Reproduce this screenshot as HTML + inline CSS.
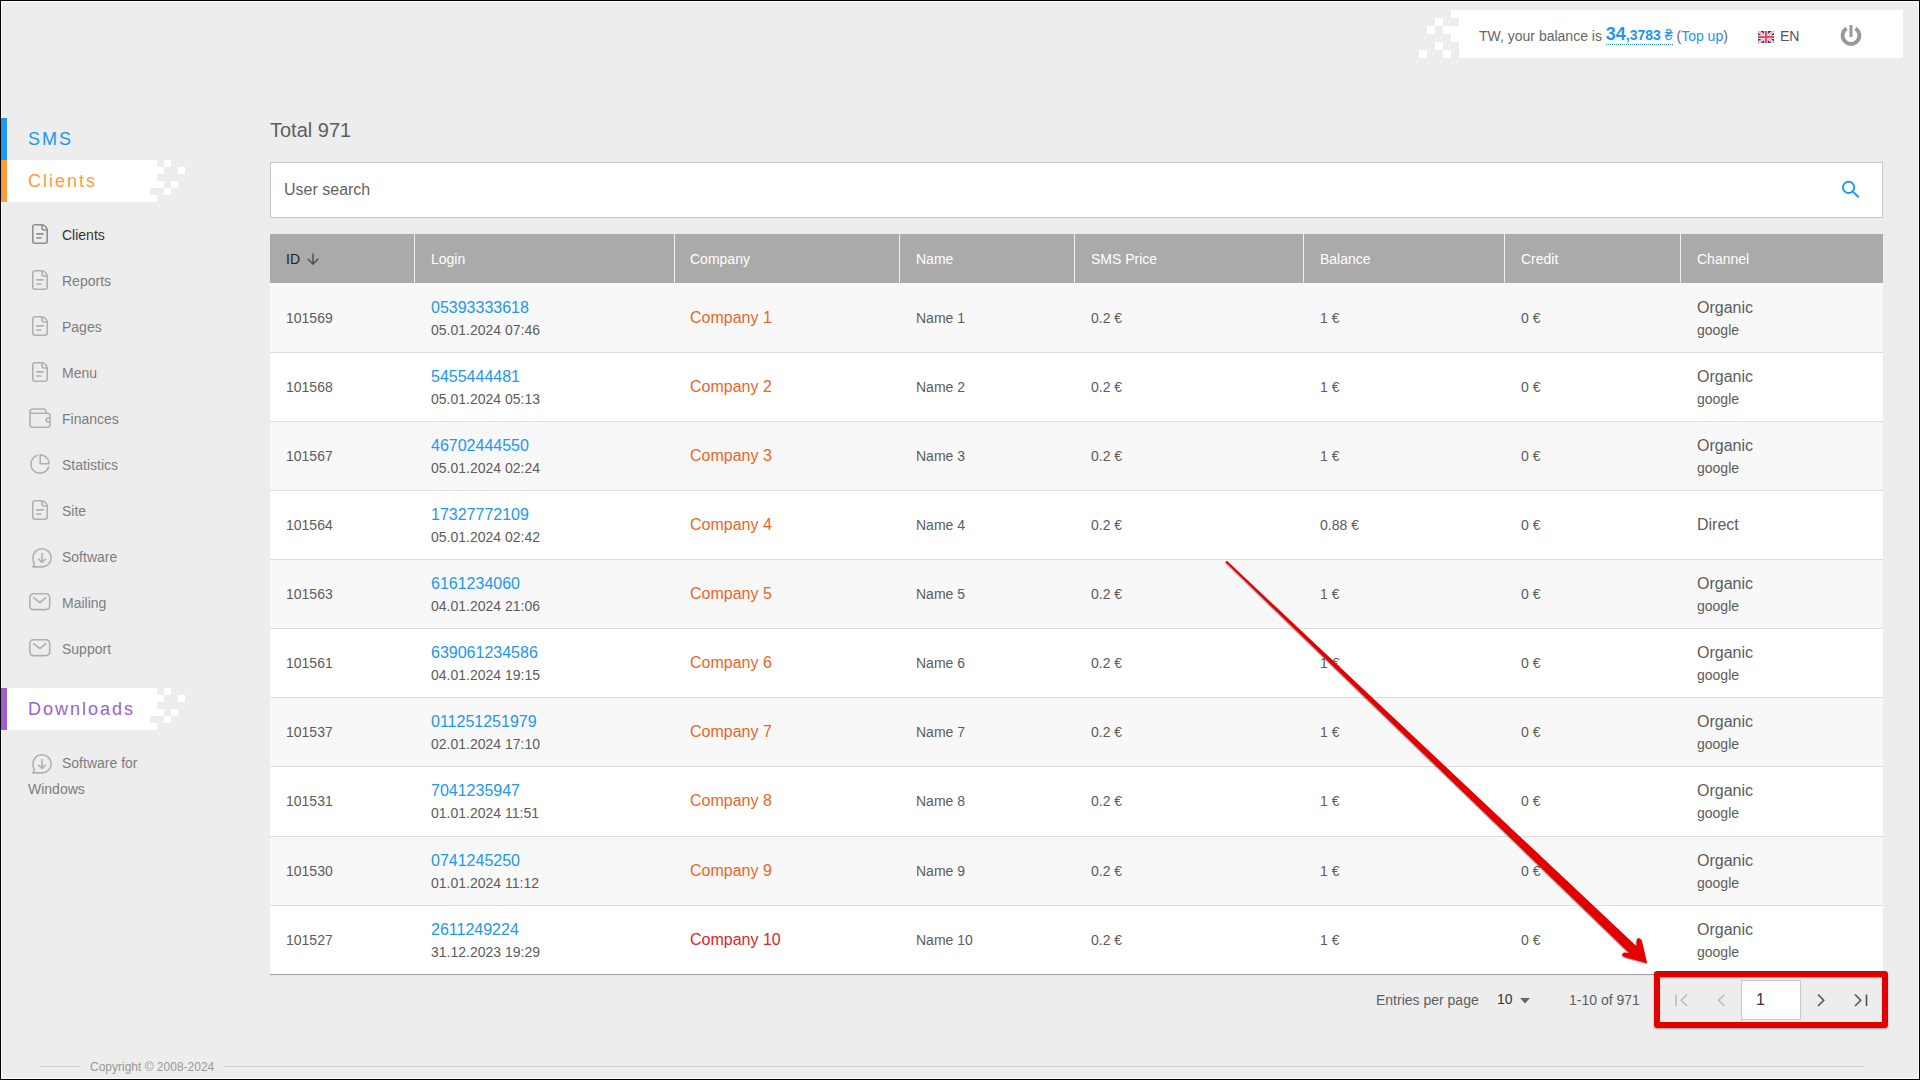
<!DOCTYPE html>
<html><head><meta charset="utf-8"><title>Clients</title>
<style>
*{box-sizing:border-box;margin:0;padding:0}
html,body{width:1920px;height:1080px;overflow:hidden}
body{background:#ededed;font-family:"Liberation Sans",sans-serif;position:relative;color:#555}
.abs{position:absolute;white-space:nowrap}
.frame{position:absolute;left:0;top:0;width:1920px;height:1080px;border:1px solid #000;pointer-events:none;z-index:50}
.frame2{position:absolute;left:1px;top:1px;width:1918px;height:1078px;border:1px solid #fff;pointer-events:none;z-index:50}
/* top bar */
.topbox{position:absolute;left:1459px;top:10px;width:444px;height:48px;background:#fff}
.px{position:absolute;background:#fff}
.tb{position:absolute;white-space:nowrap;font-size:14px;line-height:16px;color:#666}
/* sidebar */
.bar{position:absolute;left:1px;width:6px;z-index:60}
.sec{position:absolute;white-space:nowrap;font-size:18px;line-height:20px;letter-spacing:2px}
.mi{position:absolute;left:62px;white-space:nowrap;font-size:14px;line-height:16px;color:#7d7d7d}
.ic{position:absolute}
/* main */
.total{position:absolute;left:270px;top:119px;font-size:20px;line-height:22px;color:#5e5e5e;white-space:nowrap}
.search{position:absolute;left:270px;top:162px;width:1613px;height:56px;background:#fff;border:1px solid #c8c8c8}
.search .ph{position:absolute;left:13px;top:18px;font-size:16px;line-height:18px;color:#636363;white-space:nowrap}
.tbl{position:absolute;left:270px;top:234px;width:1613px;height:741px}
.thead{position:absolute;left:0;top:0;width:1613px;height:49px;background:#aaa}
.th{position:absolute;top:17px;font-size:14px;line-height:16px;color:#fff;white-space:nowrap}
.vd{position:absolute;top:0;width:1px;height:49px;background:#eee}
.row{position:absolute;left:0;width:1613px;border-bottom:1px solid #ddd}
.row.last{border-bottom:1px solid #a3a3a3;box-shadow:0 1px 0 #e4e4e4}
.c{position:absolute;white-space:nowrap}
.id,.nm{top:27px;font-size:14px;line-height:16px;color:#5c5c5c}
.lg{top:16px}
.ln{font-size:16px;line-height:18px;color:#2196f3}
.dt{font-size:14px;line-height:16px;color:#5c5c5c;margin-top:5px}
.co{top:26px;font-size:16px;line-height:18px;color:#ec6526}
.co.red{color:#d9262a}
.ch{top:16px}
.ch .o{font-size:16px;line-height:18px;color:#5c5c5c}
.ch .g{font-size:14px;line-height:16px;color:#5c5c5c;margin-top:5px}
.ch1{top:26px;font-size:16px;line-height:18px;color:#5c5c5c}
/* pager */
.pg{position:absolute;white-space:nowrap;font-size:14px;line-height:16px;color:#5e5e5e}
.footer-line{position:absolute;top:1066px;height:1px;background:#ccc}

</style></head><body>
<div class="frame"></div><div class="frame2"></div>

<!-- top bar -->
<div class="topbox"></div>
<div class="px" style="left:1451px;top:10px;width:8px;height:8px"></div>
<div class="px" style="left:1435px;top:18px;width:8px;height:8px"></div>
<div class="px" style="left:1427px;top:26px;width:8px;height:8px"></div>
<div class="px" style="left:1443px;top:26px;width:16px;height:8px"></div>
<div class="px" style="left:1451px;top:34px;width:8px;height:8px"></div>
<div class="px" style="left:1435px;top:42px;width:8px;height:8px"></div>
<div class="px" style="left:1419px;top:50px;width:8px;height:8px"></div>
<div class="px" style="left:1443px;top:50px;width:8px;height:8px"></div>
<div class="tb" style="left:1479px;top:26px">TW, your balance is <span style="color:#2196f3;font-weight:bold;border-bottom:1px dotted #2196f3;vertical-align:1px;padding-bottom:1px"><span style="font-size:18px">34</span><span style="font-size:14px">,3783 <span style="font-weight:normal">₴</span></span></span> (<span style="color:#2196f3">Top up</span>)</div>
<svg class="abs" style="left:1758px;top:31px" width="16" height="12" viewBox="0 0 16 12">
<rect width="16" height="12" fill="#2b3a8a"/>
<path d="M0,0 L16,12 M16,0 L0,12" stroke="#fff" stroke-width="2.6"/>
<path d="M0,0 L16,12 M16,0 L0,12" stroke="#f0506a" stroke-width="0.8"/>
<path d="M8,0 V12 M0,6 H16" stroke="#fff" stroke-width="3.6"/>
<path d="M8,0 V12 M0,6 H16" stroke="#f54458" stroke-width="2.2"/>
</svg>
<div class="tb" style="left:1780px;top:28px;color:#555">EN</div>
<svg class="abs" style="left:1840px;top:25px" width="22" height="22" viewBox="0 0 22 22">
<path d="M6.6,3.4 A8.4,8.4 0 1 0 15.4,3.4" fill="none" stroke="#999" stroke-width="3.8"/>
<path d="M11,0 V12" stroke="#999" stroke-width="3"/>
</svg>

<!-- sidebar -->
<div class="bar" style="top:118px;height:42px;background:#2196f3"></div>
<div class="sec" style="left:28px;top:129px;color:#2196f3">SMS</div>

<svg class="abs" style="left:7px;top:160px" width="180" height="42">
<path fill="#fff" d="M0,0H150V28H143V35H150V42H0Z M157,0h7v7h-7z M150,7h7v7h-7z M171,7h7v7h-7z M150,21h7v7h-7z M164,21h7v7h-7z M157,28h7v7h-7z" />
</svg>
<div class="bar" style="top:160px;height:42px;background:#ff9a40"></div>
<div class="sec" style="left:28px;top:171px;color:#ff9a40">Clients</div>

<svg class="ic" style="left:32px;top:224px" width="16" height="20" viewBox="0 0 16 20"><path d="M0.8,3 Q0.8,0.8 3,0.8 H10.3 Q11.6,0.8 13.2,2.4 L13.8,3 Q15.2,4.4 15.2,6 V17 Q15.2,19.2 13,19.2 H3 Q0.8,19.2 0.8,17 Z M10,0.8 V4 Q10,6 12,6 H15.2 M4.3,9.9 H11.7 M4.3,14 H9.5" fill="none" stroke="#8f8f8f" stroke-width="1.6" stroke-linejoin="round"/></svg>
<div class="mi" style="top:227px;color:#333">Clients</div>
<svg class="ic" style="left:32px;top:270px" width="16" height="20" viewBox="0 0 16 20"><path d="M0.8,3 Q0.8,0.8 3,0.8 H10.3 Q11.6,0.8 13.2,2.4 L13.8,3 Q15.2,4.4 15.2,6 V17 Q15.2,19.2 13,19.2 H3 Q0.8,19.2 0.8,17 Z M10,0.8 V4 Q10,6 12,6 H15.2 M4.3,9.9 H11.7 M4.3,14 H9.5" fill="none" stroke="#b0b0b0" stroke-width="1.6" stroke-linejoin="round"/></svg>
<div class="mi" style="top:273px;color:#7d7d7d">Reports</div>
<svg class="ic" style="left:32px;top:316px" width="16" height="20" viewBox="0 0 16 20"><path d="M0.8,3 Q0.8,0.8 3,0.8 H10.3 Q11.6,0.8 13.2,2.4 L13.8,3 Q15.2,4.4 15.2,6 V17 Q15.2,19.2 13,19.2 H3 Q0.8,19.2 0.8,17 Z M10,0.8 V4 Q10,6 12,6 H15.2 M4.3,9.9 H11.7 M4.3,14 H9.5" fill="none" stroke="#b0b0b0" stroke-width="1.6" stroke-linejoin="round"/></svg>
<div class="mi" style="top:319px;color:#7d7d7d">Pages</div>
<svg class="ic" style="left:32px;top:362px" width="16" height="20" viewBox="0 0 16 20"><path d="M0.8,3 Q0.8,0.8 3,0.8 H10.3 Q11.6,0.8 13.2,2.4 L13.8,3 Q15.2,4.4 15.2,6 V17 Q15.2,19.2 13,19.2 H3 Q0.8,19.2 0.8,17 Z M10,0.8 V4 Q10,6 12,6 H15.2 M4.3,9.9 H11.7 M4.3,14 H9.5" fill="none" stroke="#b0b0b0" stroke-width="1.6" stroke-linejoin="round"/></svg>
<div class="mi" style="top:365px;color:#7d7d7d">Menu</div>
<svg class="ic" style="left:29px;top:408px" width="22" height="20" viewBox="0 0 22 20"><path d="M1,12 V4 Q1,1 4,1 H14.5 Q17,1 17,4 V5 M1,5.2 H18.5 Q21,5.2 21,8 V17 Q21,19.2 18.5,19.2 H3.5 Q1,19.2 1,16.5 V4 M21,10 H19.2 A2,2 0 0 0 19.2,14 H21" fill="none" stroke="#b0b0b0" stroke-width="1.6" stroke-linejoin="round"/></svg>
<div class="mi" style="top:411px;color:#7d7d7d">Finances</div>
<svg class="ic" style="left:30px;top:454px" width="20" height="20" viewBox="0 0 20 20"><path d="M8.0,1.3 A9.1,9.1 0 1 0 18.8,12.5 M10.2,0.9 V9.8 H19.1 A8.9,8.9 0 0 0 10.2,0.9 Z" fill="none" stroke="#b0b0b0" stroke-width="1.6" stroke-linejoin="round"/></svg>
<div class="mi" style="top:457px;color:#7d7d7d">Statistics</div>
<svg class="ic" style="left:32px;top:500px" width="16" height="20" viewBox="0 0 16 20"><path d="M0.8,3 Q0.8,0.8 3,0.8 H10.3 Q11.6,0.8 13.2,2.4 L13.8,3 Q15.2,4.4 15.2,6 V17 Q15.2,19.2 13,19.2 H3 Q0.8,19.2 0.8,17 Z M10,0.8 V4 Q10,6 12,6 H15.2 M4.3,9.9 H11.7 M4.3,14 H9.5" fill="none" stroke="#b0b0b0" stroke-width="1.6" stroke-linejoin="round"/></svg>
<div class="mi" style="top:503px;color:#7d7d7d">Site</div>
<svg class="ic" style="left:31px;top:547px" width="22" height="22" viewBox="0 0 22 22"><path d="M11,19.9 A9.1,9.1 0 1 0 1.9,10.8 Q1.9,14.5 3.4,17.3 L1.9,19.9 Z M11,6 V15.3 M7.3,11.8 L11,15.5 L14.7,11.8" fill="none" stroke="#b0b0b0" stroke-width="1.6" stroke-linejoin="round"/></svg>
<div class="mi" style="top:549px;color:#7d7d7d">Software</div>
<svg class="ic" style="left:29px;top:593px" width="22" height="18" viewBox="0 0 22 18"><path d="M4.8,0.8 H16.7 Q20.7,0.8 20.7,4.8 V12.6 Q20.7,16.6 16.7,16.6 H4.8 Q0.8,16.6 0.8,12.6 V4.8 Q0.8,0.8 4.8,0.8 Z M4.3,4.4 L10.9,9.6 L17.2,4.4" fill="none" stroke="#b0b0b0" stroke-width="1.6" stroke-linejoin="round"/></svg>
<div class="mi" style="top:595px;color:#7d7d7d">Mailing</div>
<svg class="ic" style="left:29px;top:639px" width="22" height="18" viewBox="0 0 22 18"><path d="M4.8,0.8 H16.7 Q20.7,0.8 20.7,4.8 V12.6 Q20.7,16.6 16.7,16.6 H4.8 Q0.8,16.6 0.8,12.6 V4.8 Q0.8,0.8 4.8,0.8 Z M4.3,4.4 L10.9,9.6 L17.2,4.4" fill="none" stroke="#b0b0b0" stroke-width="1.6" stroke-linejoin="round"/></svg>
<div class="mi" style="top:641px;color:#7d7d7d">Support</div>
<svg class="ic" style="left:31px;top:753px" width="22" height="22" viewBox="0 0 22 22"><path d="M11,19.9 A9.1,9.1 0 1 0 1.9,10.8 Q1.9,14.5 3.4,17.3 L1.9,19.9 Z M11,6 V15.3 M7.3,11.8 L11,15.5 L14.7,11.8" fill="none" stroke="#b0b0b0" stroke-width="1.6" stroke-linejoin="round"/></svg>
<div class="mi" style="top:755px">Software for</div>
<div class="mi" style="left:28px;top:781px">Windows</div>

<svg class="abs" style="left:7px;top:688px" width="180" height="42">
<path fill="#fff" d="M0,0H150V28H143V35H150V42H0Z M157,0h7v7h-7z M150,7h7v7h-7z M171,7h7v7h-7z M150,21h7v7h-7z M164,21h7v7h-7z M157,28h7v7h-7z" />
</svg>
<div class="bar" style="top:688px;height:42px;background:#9c5fd0"></div>
<div class="sec" style="left:28px;top:699px;color:#9c5fd0">Downloads</div>

<!-- main -->
<div class="total">Total 971</div>
<div class="search"><div class="ph">User search</div>
<svg class="abs" style="left:1566px;top:16px" width="24" height="24" viewBox="0 0 24 24">
<circle cx="11.6" cy="8.4" r="5.6" fill="none" stroke="#2196f3" stroke-width="1.9"/>
<path d="M15.6,12.4 L21.2,17.8" stroke="#2196f3" stroke-width="2" stroke-linecap="round"/>
</svg>
</div>

<div class="tbl">
<div class="thead">
<div class="th" style="left:16px;color:#222">ID</div>
<svg class="abs" style="left:37px;top:17px" width="12" height="16" viewBox="0 0 12 16"><path d="M6,2.4 V13 M0.8,7.8 L6,13 L11.2,7.8" fill="none" stroke="#555" stroke-width="1.6"/></svg>
<div class="vd" style="left:144px"></div><div class="th" style="left:161px">Login</div>
<div class="vd" style="left:404px"></div><div class="th" style="left:420px">Company</div>
<div class="vd" style="left:629px"></div><div class="th" style="left:646px">Name</div>
<div class="vd" style="left:804px"></div><div class="th" style="left:821px">SMS Price</div>
<div class="vd" style="left:1033px"></div><div class="th" style="left:1050px">Balance</div>
<div class="vd" style="left:1234px"></div><div class="th" style="left:1251px">Credit</div>
<div class="vd" style="left:1410px"></div><div class="th" style="left:1427px">Channel</div>
</div>
<div class="row" style="top:49px;height:70px;background:#f8f8f8"><div style="position:absolute;left:0;top:0px;width:100%;height:100%"><div class="c id" style="left:16px">101569</div><div class="c lg" style="left:161px"><div class="ln">05393333618</div><div class="dt">05.01.2024 07:46</div></div><div class="c co" style="left:420px">Company 1</div><div class="c nm" style="left:646px">Name 1</div><div class="c nm" style="left:821px">0.2 €</div><div class="c nm" style="left:1050px">1 €</div><div class="c nm" style="left:1251px">0 €</div><div class="c ch" style="left:1427px"><div class="o">Organic</div><div class="g">google</div></div></div></div>
<div class="row" style="top:119px;height:69px;background:#fff"><div style="position:absolute;left:0;top:-1px;width:100%;height:100%"><div class="c id" style="left:16px">101568</div><div class="c lg" style="left:161px"><div class="ln">5455444481</div><div class="dt">05.01.2024 05:13</div></div><div class="c co" style="left:420px">Company 2</div><div class="c nm" style="left:646px">Name 2</div><div class="c nm" style="left:821px">0.2 €</div><div class="c nm" style="left:1050px">1 €</div><div class="c nm" style="left:1251px">0 €</div><div class="c ch" style="left:1427px"><div class="o">Organic</div><div class="g">google</div></div></div></div>
<div class="row" style="top:188px;height:69px;background:#f8f8f8"><div style="position:absolute;left:0;top:-1px;width:100%;height:100%"><div class="c id" style="left:16px">101567</div><div class="c lg" style="left:161px"><div class="ln">46702444550</div><div class="dt">05.01.2024 02:24</div></div><div class="c co" style="left:420px">Company 3</div><div class="c nm" style="left:646px">Name 3</div><div class="c nm" style="left:821px">0.2 €</div><div class="c nm" style="left:1050px">1 €</div><div class="c nm" style="left:1251px">0 €</div><div class="c ch" style="left:1427px"><div class="o">Organic</div><div class="g">google</div></div></div></div>
<div class="row" style="top:257px;height:69px;background:#fff"><div style="position:absolute;left:0;top:-1px;width:100%;height:100%"><div class="c id" style="left:16px">101564</div><div class="c lg" style="left:161px"><div class="ln">17327772109</div><div class="dt">05.01.2024 02:42</div></div><div class="c co" style="left:420px">Company 4</div><div class="c nm" style="left:646px">Name 4</div><div class="c nm" style="left:821px">0.2 €</div><div class="c nm" style="left:1050px">0.88 €</div><div class="c nm" style="left:1251px">0 €</div><div class="c ch1" style="left:1427px">Direct</div></div></div>
<div class="row" style="top:326px;height:69px;background:#f8f8f8"><div style="position:absolute;left:0;top:-1px;width:100%;height:100%"><div class="c id" style="left:16px">101563</div><div class="c lg" style="left:161px"><div class="ln">6161234060</div><div class="dt">04.01.2024 21:06</div></div><div class="c co" style="left:420px">Company 5</div><div class="c nm" style="left:646px">Name 5</div><div class="c nm" style="left:821px">0.2 €</div><div class="c nm" style="left:1050px">1 €</div><div class="c nm" style="left:1251px">0 €</div><div class="c ch" style="left:1427px"><div class="o">Organic</div><div class="g">google</div></div></div></div>
<div class="row" style="top:395px;height:69px;background:#fff"><div style="position:absolute;left:0;top:-1px;width:100%;height:100%"><div class="c id" style="left:16px">101561</div><div class="c lg" style="left:161px"><div class="ln">639061234586</div><div class="dt">04.01.2024 19:15</div></div><div class="c co" style="left:420px">Company 6</div><div class="c nm" style="left:646px">Name 6</div><div class="c nm" style="left:821px">0.2 €</div><div class="c nm" style="left:1050px">1 €</div><div class="c nm" style="left:1251px">0 €</div><div class="c ch" style="left:1427px"><div class="o">Organic</div><div class="g">google</div></div></div></div>
<div class="row" style="top:464px;height:69px;background:#f8f8f8"><div style="position:absolute;left:0;top:-1px;width:100%;height:100%"><div class="c id" style="left:16px">101537</div><div class="c lg" style="left:161px"><div class="ln">011251251979</div><div class="dt">02.01.2024 17:10</div></div><div class="c co" style="left:420px">Company 7</div><div class="c nm" style="left:646px">Name 7</div><div class="c nm" style="left:821px">0.2 €</div><div class="c nm" style="left:1050px">1 €</div><div class="c nm" style="left:1251px">0 €</div><div class="c ch" style="left:1427px"><div class="o">Organic</div><div class="g">google</div></div></div></div>
<div class="row" style="top:533px;height:70px;background:#fff"><div style="position:absolute;left:0;top:-1px;width:100%;height:100%"><div class="c id" style="left:16px">101531</div><div class="c lg" style="left:161px"><div class="ln">7041235947</div><div class="dt">01.01.2024 11:51</div></div><div class="c co" style="left:420px">Company 8</div><div class="c nm" style="left:646px">Name 8</div><div class="c nm" style="left:821px">0.2 €</div><div class="c nm" style="left:1050px">1 €</div><div class="c nm" style="left:1251px">0 €</div><div class="c ch" style="left:1427px"><div class="o">Organic</div><div class="g">google</div></div></div></div>
<div class="row" style="top:603px;height:69px;background:#f8f8f8"><div style="position:absolute;left:0;top:-1px;width:100%;height:100%"><div class="c id" style="left:16px">101530</div><div class="c lg" style="left:161px"><div class="ln">0741245250</div><div class="dt">01.01.2024 11:12</div></div><div class="c co" style="left:420px">Company 9</div><div class="c nm" style="left:646px">Name 9</div><div class="c nm" style="left:821px">0.2 €</div><div class="c nm" style="left:1050px">1 €</div><div class="c nm" style="left:1251px">0 €</div><div class="c ch" style="left:1427px"><div class="o">Organic</div><div class="g">google</div></div></div></div>
<div class="row last" style="top:672px;height:69px;background:#fff"><div style="position:absolute;left:0;top:-1px;width:100%;height:100%"><div class="c id" style="left:16px">101527</div><div class="c lg" style="left:161px"><div class="ln">2611249224</div><div class="dt">31.12.2023 19:29</div></div><div class="c co red" style="left:420px">Company 10</div><div class="c nm" style="left:646px">Name 10</div><div class="c nm" style="left:821px">0.2 €</div><div class="c nm" style="left:1050px">1 €</div><div class="c nm" style="left:1251px">0 €</div><div class="c ch" style="left:1427px"><div class="o">Organic</div><div class="g">google</div></div></div></div>
</div>

<!-- pager -->
<div class="pg" style="left:1376px;top:992px">Entries per page</div>
<div class="pg" style="left:1497px;top:991px;color:#333">10</div>
<svg class="abs" style="left:1520px;top:998px" width="12" height="6"><path d="M0,0 H10 L5,5.4Z" fill="#666"/></svg>
<div class="pg" style="left:1569px;top:992px">1-10 of 971</div>

<div class="abs" style="left:1741px;top:980px;width:60px;height:40px;background:#fff;border:1px solid #c8c8c8"></div>
<div class="pg" style="left:1756px;top:991px;font-size:16px;line-height:18px;color:#333">1</div>
<svg class="abs" style="left:1670px;top:990px" width="210" height="20" viewBox="0 0 210 20">
<path d="M6,4.5 V16 M17,4.5 L11.3,10.3 L17,16" fill="none" stroke="#bbb" stroke-width="1.6"/>
<path d="M54.5,4.5 L48.8,10.3 L54.5,16" fill="none" stroke="#bbb" stroke-width="1.6"/>
<path d="M148,4.5 L153.7,10.3 L148,16" fill="none" stroke="#555" stroke-width="1.6"/>
<path d="M185,4.5 L190.7,10.3 L185,16 M196.5,4.5 V16" fill="none" stroke="#555" stroke-width="1.6"/>
</svg>

<!-- red box -->
<div class="abs" style="left:1654px;top:971px;width:234px;height:57px;border:6px solid #e10000;border-radius:3px;z-index:40;box-shadow:0 1px 2px rgba(0,0,0,.35), inset 0 1px 1px rgba(0,0,0,.35)"></div>

<!-- arrow -->
<svg class="abs" style="left:0;top:0;z-index:41" width="1920" height="1080">
<defs><filter id="sh" x="-5%" y="-5%" width="110%" height="110%"><feDropShadow dx="-0.6" dy="0.9" stdDeviation="0.7" flood-color="#000" flood-opacity="0.4"/></filter></defs>
<path filter="url(#sh)" fill="#e30000" d="M1227.2,561.0 L1636.3,946.1 L1636.6,941 Q1637,937.2 1639.6,938.4 Q1641.6,939.3 1642,941 L1647.2,963.2 L1625,957.2 Q1621.3,956 1622.5,953.8 Q1623.5,952.5 1625.5,952.6 L1629.2,952.9 L1226.5,563.1 A1.05,1.05 0 0 1 1227.2,561.0 Z"/>
</svg>

<!-- footer -->
<div class="footer-line" style="left:40px;width:40px"></div>
<div class="abs" style="left:90px;top:1060px;font-size:12px;line-height:14px;color:#999">Copyright © 2008-2024</div>
<div class="footer-line" style="left:225px;width:1638px"></div>

</body></html>
